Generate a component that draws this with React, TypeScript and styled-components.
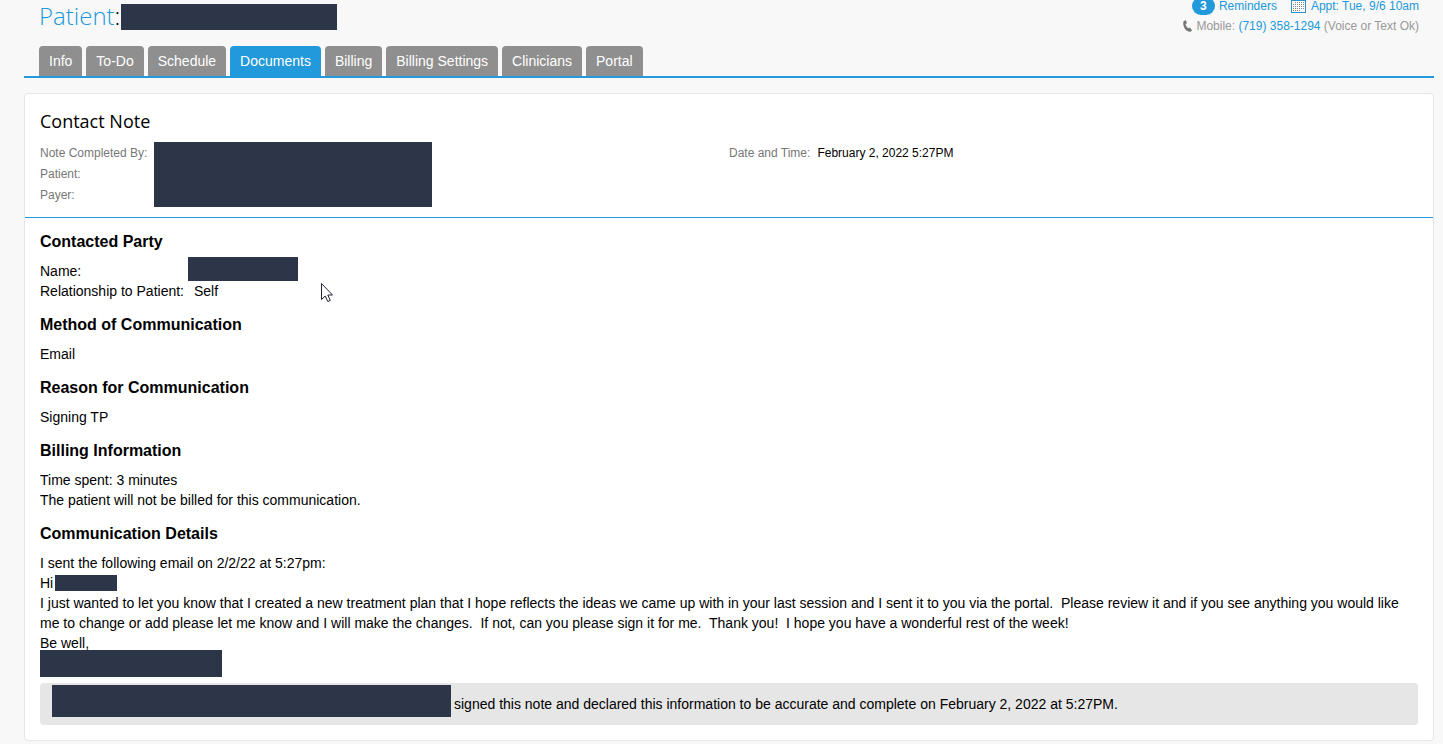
import React from "react";
import styled, { createGlobalStyle } from "styled-components";

const GlobalStyle = createGlobalStyle`
  * { box-sizing: border-box; }
  body {
    margin: 0;
    background: #f8f8f8;
    color: #000;
    font: 14px/20px "Liberation Sans", Arial, sans-serif;
  }
  h1, h2, h3, p, dl, dd { margin: 0; }
`;

const Page = styled.div`
  padding: 0 9px 3px 24px;
`;

const Header = styled.header`
  display: flex;
  justify-content: space-between;
  align-items: flex-start;
  padding: 0 15px;
  height: 46px;
`;

const PatientTitle = styled.h1`
  display: flex;
  align-items: center;
  gap: 1px;
  height: 34px;
  font: 300 24px/32px "Open Sans", sans-serif;
`;

const PatientName = styled.span`
  height: 34px;
`;

const PatientLink = styled.a`
  color: #2199da;
  text-decoration: none;
`;

const Redacted = styled.span<{ $w: number; $h: number }>`
  display: inline-block;
  flex: none;
  width: ${(p) => p.$w}px;
  height: ${(p) => p.$h}px;
  background: #2c3648;
`;

const Contact = styled.div`
  display: flex;
  flex-direction: column;
  align-items: flex-end;
  font-size: 12px;
  line-height: 20px;
  color: #999;
  a { color: #2199da; text-decoration: none; }
`;

const ContactLine = styled.div`
  display: flex;
  align-items: center;
  gap: 4px;
  height: 20px;
  &:first-child { height: 16px; padding-bottom: 4px; }
`;

const Badge = styled.span`
  width: 23px;
  height: 18px;
  border-radius: 9px;
  background: #2199da;
  color: #fff;
  font-weight: bold;
  line-height: 18px;
  text-align: center;
`;

const CalendarSlot = styled.span`
  display: flex;
  margin-left: 10px;
  margin-right: 1px;
`;

const Tabs = styled.nav`
  display: flex;
  gap: 4px;
  padding: 0 15px;
  border-bottom: 2px solid #2199da;
`;

const Tab = styled.a<{ $active?: boolean }>`
  padding: 0 10px;
  height: 30px;
  line-height: 30px;
  border-radius: 4px 4px 0 0;
  background: ${(p) => (p.$active ? "#2199da" : "#8f8f8f")};
  color: #fff;
  text-decoration: none;
`;

const Card = styled.main`
  margin-top: 15px;
  border: 1px solid #e6e6e6;
  border-radius: 4px;
  background: #fff;
`;

const CardHead = styled.div`
  padding: 14px 15px 10px;
  border-bottom: 1px solid #2199da;
`;

const CardTitle = styled.h2`
  font: 400 18px/26px "Open Sans", sans-serif;
`;

const Meta = styled.div`
  display: grid;
  grid-template-columns: 1fr 1fr;
  margin-top: 8px;
  font-size: 12px;
  line-height: 21px;
`;

const MetaSide = styled.div`
  display: flex;
  align-items: flex-start;
  gap: 7px;
`;

const MetaText = styled.div`
  padding-top: 1px;
`;

const MetaLabel = styled(MetaText)`
  color: #777;
`;

const Body = styled.div`
  padding: 14px 15px 15px;
`;

const Section = styled.section`
  margin-bottom: 14px;
  &:last-of-type { margin-bottom: 0; }
`;

const SectionTitle = styled.h3`
  margin-bottom: 9px;
  font-size: 16px;
  line-height: 20px;
`;

const Fields = styled.dl`
  display: grid;
  grid-template-columns: auto 1fr;
  column-gap: 4px;
  dt, dd { height: 20px; }
`;

const Value = styled.dd`
  padding-left: 6px;
`;

const RedactedValue = styled.dd`
  display: flex;
  align-items: flex-end;
`;

const Line = styled.p`
  white-space: break-spaces;
`;

const Greeting = styled(Line)`
  display: flex;
  align-items: center;
  gap: 2px;
`;

const Signature = styled.div`
  display: flex;
  margin-top: -3px;
`;

const Signed = styled.footer`
  display: flex;
  align-items: flex-start;
  gap: 3px;
  min-height: 42px;
  margin-top: 6px;
  padding: 2px 12px;
  border-radius: 4px;
  background: #e6e6e6;
  line-height: 38px;
`;

const Pointer = styled.svg`
  position: absolute;
  left: 321px;
  top: 283px;
`;

const tabs = ["Info", "To-Do", "Schedule", "Documents", "Billing", "Billing Settings", "Clinicians", "Portal"];

const PhoneIcon = () => (
  <svg width="9" height="12" viewBox="0 0 9 12" aria-hidden="true">
    <path d="M0.6 1.2 2.5 0 4 3.1 2.6 4.2C3 5.9 4.1 7.5 5.4 8.3L6.9 7.5 9 10.2C8.2 11.6 6.9 12 5.6 11.6 1.8 10.3-.7 5.2.6 1.2Z" fill="#777" />
  </svg>
);

const CalendarIcon = () => (
  <svg width="15" height="13" viewBox="0 0 15 13" shapeRendering="crispEdges" aria-hidden="true">
    <rect x="0.5" y="0.5" width="14" height="12" fill="#fff" stroke="#2f90cc" />
    {[2, 4, 6, 8, 10].map((y) => (
      <path key={y} d={`M${y === 2 ? 4 : 2} ${y + 0.5}H${y === 10 ? 10 : 13}`} stroke="#888" strokeDasharray="1 1" />
    ))}
  </svg>
);

export default function App() {
  return (
    <>
      <GlobalStyle />
      <Page>
        <Header>
          <PatientTitle>
            <PatientName><PatientLink href="#patient">Patient</PatientLink>:</PatientName>
            <Redacted $w={216} $h={26} />
          </PatientTitle>
          <Contact>
            <ContactLine>
              <Badge>3</Badge>
              <a href="#reminders">Reminders</a>
              <CalendarSlot><CalendarIcon /></CalendarSlot>
              <a href="#appointment">Appt: Tue, 9/6 10am</a>
            </ContactLine>
            <ContactLine>
              <PhoneIcon />
              <span>Mobile: <a href="tel:7193581294">(719) 358-1294</a> (Voice or Text Ok)</span>
            </ContactLine>
          </Contact>
        </Header>
        <Tabs>
          {tabs.map((t) => (
            <Tab key={t} href={`#${t}`} $active={t === "Documents"}>{t}</Tab>
          ))}
        </Tabs>
        <Card>
          <CardHead>
            <CardTitle>Contact Note</CardTitle>
            <Meta>
              <MetaSide>
                <MetaLabel>
                  <div>Note Completed By:</div>
                  <div>Patient:</div>
                  <div>Payer:</div>
                </MetaLabel>
                <Redacted $w={278} $h={65} />
              </MetaSide>
              <MetaSide>
                <MetaLabel>Date and Time:</MetaLabel>
                <MetaText>February 2, 2022 5:27PM</MetaText>
              </MetaSide>
            </Meta>
          </CardHead>
          <Body>
            <Section>
              <SectionTitle>Contacted Party</SectionTitle>
              <Fields>
                <dt>Name:</dt>
                <RedactedValue><Redacted $w={110} $h={24} /></RedactedValue>
                <dt>Relationship to Patient:</dt>
                <Value>Self</Value>
              </Fields>
            </Section>
            <Section>
              <SectionTitle>Method of Communication</SectionTitle>
              <Line>Email</Line>
            </Section>
            <Section>
              <SectionTitle>Reason for Communication</SectionTitle>
              <Line>Signing TP</Line>
            </Section>
            <Section>
              <SectionTitle>Billing Information</SectionTitle>
              <Line>Time spent: 3 minutes</Line>
              <Line>The patient will not be billed for this communication.</Line>
            </Section>
            <Section>
              <SectionTitle>Communication Details</SectionTitle>
              <Line>I sent the following email on 2/2/22 at 5:27pm:</Line>
              <Greeting>Hi<Redacted $w={62} $h={16} /></Greeting>
              <Line>{"I just wanted to let you know that I created a new treatment plan that I hope reflects the ideas we came up with in your last session and I sent it to you via the portal.  Please review it and if you see anything you would like me to change or add please let me know and I will make the changes.  If not, can you please sign it for me.  Thank you!  I hope you have a wonderful rest of the week!"}</Line>
              <Line>Be well,</Line>
              <Signature><Redacted $w={182} $h={27} /></Signature>
            </Section>
            <Signed>
              <Redacted $w={399} $h={32} />
              <span>signed this note and declared this information to be accurate and complete on February 2, 2022 at 5:27PM.</span>
            </Signed>
          </Body>
        </Card>
      </Page>
      <Pointer width="12" height="19" viewBox="0 0 12 19" aria-hidden="true">
        <path d="M0.5 0.5V16.5L4.2 13 6.8 18.5 9.3 17.4 6.8 12H11.5Z" fill="#fff" stroke="#223" />
      </Pointer>
    </>
  );
}
